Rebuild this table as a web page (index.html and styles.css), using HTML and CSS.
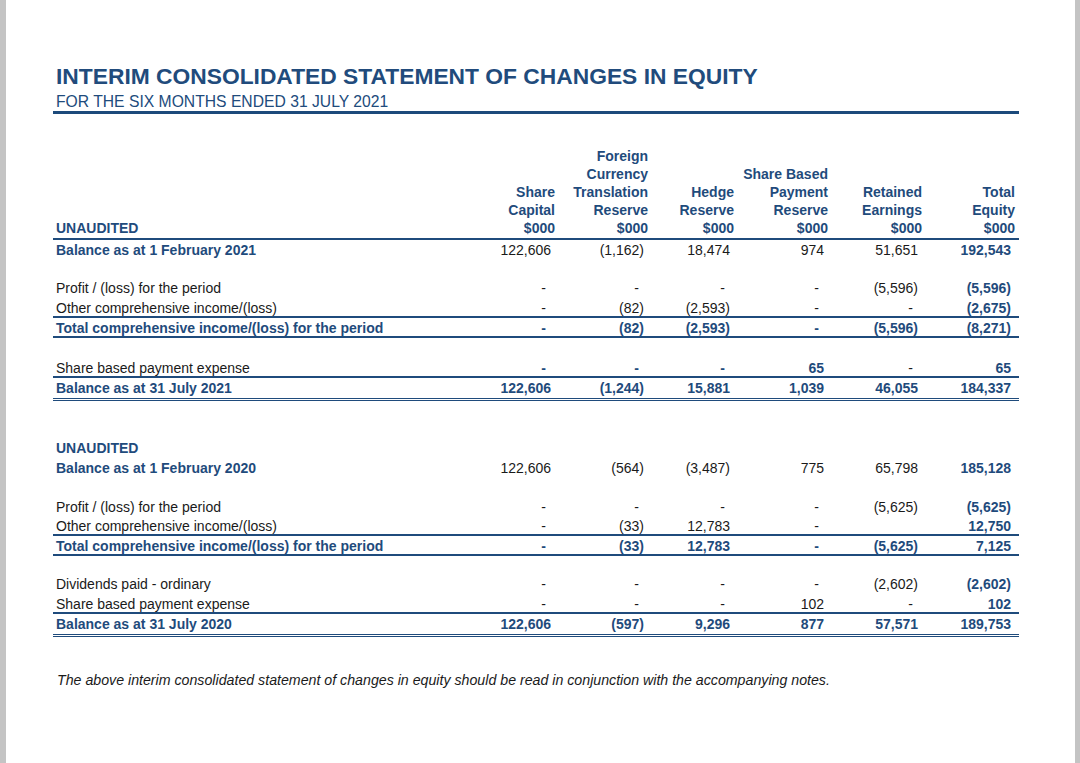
FILE: index.html
```html
<!DOCTYPE html>
<html>
<head>
<meta charset="utf-8">
<link rel="stylesheet" href="styles.css">
</head>
<body>
<div class="page">
  <header class="head">
    <h1 class="title">INTERIM CONSOLIDATED STATEMENT OF CHANGES IN EQUITY</h1>
    <div class="subtitle">FOR THE SIX MONTHS ENDED 31 JULY 2021</div>
  </header>

  <div class="table">
    <div class="hrow">
      <div></div>
      <div class="hc">Share<br>Capital</div>
      <div class="hc">Foreign<br>Currency<br>Translation<br>Reserve</div>
      <div class="hc">Hedge<br>Reserve</div>
      <div class="hc">Share Based<br>Payment<br>Reserve</div>
      <div class="hc">Retained<br>Earnings</div>
      <div class="hc">Total<br>Equity</div>
    </div>
    <div class="row unit">
      <div class="lab b">UNAUDITED</div>
      <div class="hc">$000</div>
      <div class="hc">$000</div>
      <div class="hc">$000</div>
      <div class="hc">$000</div>
      <div class="hc">$000</div>
      <div class="hc">$000</div>
    </div>

    <div class="row">
      <div class="lab b">Balance as at 1 February 2021</div>
      <div class="n">122,606</div><div class="n">(1,162)</div><div class="n">18,474</div><div class="n">974</div><div class="n">51,651</div><div class="n b">192,543</div>
    </div>
    <div class="gap s"></div>
    <div class="row">
      <div class="lab">Profit / (loss) for the period</div>
      <div class="d">-</div><div class="d">-</div><div class="d">-</div><div class="d">-</div><div class="n">(5,596)</div><div class="n b">(5,596)</div>
    </div>
    <div class="row ul">
      <div class="lab">Other comprehensive income/(loss)</div>
      <div class="d">-</div><div class="n">(82)</div><div class="n">(2,593)</div><div class="d">-</div><div class="d">-</div><div class="n b">(2,675)</div>
    </div>
    <div class="row ul b">
      <div class="lab">Total comprehensive income/(loss) for the period</div>
      <div class="d">-</div><div class="n">(82)</div><div class="n">(2,593)</div><div class="d">-</div><div class="n">(5,596)</div><div class="n">(8,271)</div>
    </div>
    <div class="gap"></div>
    <div class="row ul">
      <div class="lab">Share based payment expense</div>
      <div class="d b">-</div><div class="d b">-</div><div class="d b">-</div><div class="n b">65</div><div class="d">-</div><div class="n b">65</div>
    </div>
    <div class="row dbl b">
      <div class="lab">Balance as at 31 July 2021</div>
      <div class="n">122,606</div><div class="n">(1,244)</div><div class="n">15,881</div><div class="n">1,039</div><div class="n">46,055</div><div class="n">184,337</div>
    </div>

    <div class="gap big"></div>
    <div class="row">
      <div class="lab b">UNAUDITED</div>
    </div>
    <div class="row">
      <div class="lab b">Balance as at 1 February 2020</div>
      <div class="n">122,606</div><div class="n">(564)</div><div class="n">(3,487)</div><div class="n">775</div><div class="n">65,798</div><div class="n b">185,128</div>
    </div>
    <div class="gap m"></div>
    <div class="row short">
      <div class="lab">Profit / (loss) for the period</div>
      <div class="d">-</div><div class="d">-</div><div class="d">-</div><div class="d">-</div><div class="n">(5,625)</div><div class="n b">(5,625)</div>
    </div>
    <div class="row ul">
      <div class="lab">Other comprehensive income/(loss)</div>
      <div class="d">-</div><div class="n">(33)</div><div class="n">12,783</div><div class="d">-</div><div class="n"></div><div class="n b">12,750</div>
    </div>
    <div class="row ul b">
      <div class="lab">Total comprehensive income/(loss) for the period</div>
      <div class="d">-</div><div class="n">(33)</div><div class="n">12,783</div><div class="d">-</div><div class="n">(5,625)</div><div class="n">7,125</div>
    </div>
    <div class="gap s"></div>
    <div class="row">
      <div class="lab">Dividends paid - ordinary</div>
      <div class="d">-</div><div class="d">-</div><div class="d">-</div><div class="d">-</div><div class="n">(2,602)</div><div class="n b">(2,602)</div>
    </div>
    <div class="row ul">
      <div class="lab">Share based payment expense</div>
      <div class="d">-</div><div class="d">-</div><div class="d">-</div><div class="n">102</div><div class="d">-</div><div class="n b">102</div>
    </div>
    <div class="row dbl b">
      <div class="lab">Balance as at 31 July 2020</div>
      <div class="n">122,606</div><div class="n">(597)</div><div class="n">9,296</div><div class="n">877</div><div class="n">57,571</div><div class="n">189,753</div>
    </div>
  </div>

  <p class="note">The above interim consolidated statement of changes in equity should be read in conjunction with the accompanying notes.</p>
</div>
</body>
</html>
```

FILE: styles.css
```css
html, body {
  margin: 0;
  padding: 0;
}
body {
  background: #c4c4c4;
  font-family: "Liberation Sans", Arial, sans-serif;
  color: #1a1a1a;
}
.page {
  margin-left: 6px;
  width: 1069px;
  height: 763px;
  background: #ffffff;
  box-sizing: border-box;
  padding: 63px 0 0 47px;
}
.head {
  width: 966px;
  border-bottom: 3px solid #1c4a7b;
  color: #214b7c;
}
.title {
  margin: 0;
  padding-left: 3px;
  font-size: 22.8px;
  line-height: 26px;
  font-weight: bold;
}
.subtitle {
  margin-top: 4px;
  padding-left: 3px;
  font-size: 15.7px;
  line-height: 18px;
}
.table {
  width: 966px;
  margin-top: 33px;
  font-size: 14px;
}
.hrow, .row {
  display: grid;
  grid-template-columns: 413px 93px 93px 86px 94px 94px 93px;
}
.hrow {
  align-items: end;
  line-height: 18px;
}
.hc {
  text-align: right;
  padding-right: 4px;
  font-weight: bold;
  color: #1f4b7c;
}
.row {
  height: 20px;
  line-height: 20px;
  box-sizing: border-box;
}
.row.short {
  height: 19px;
}
.unit {
  height: 21px;
  line-height: 19px;
  border-bottom: 2px solid #1f4b7c;
}
.lab {
  padding-left: 3px;
  white-space: nowrap;
}
.n {
  text-align: right;
  padding-right: 8px;
}
.d {
  text-align: right;
  padding-right: 13px;
}
.b {
  font-weight: bold;
  color: #1f4b7c;
}
.ul {
  border-bottom: 2px solid #1f4b7c;
}
.dbl {
  height: 23px;
  border-bottom: 3px double #1f4b7c;
}
.gap {
  height: 20px;
}
.gap.s {
  height: 18px;
}
.gap.m {
  height: 19px;
}
.gap.big {
  height: 37px;
}
.note {
  margin: 33px 0 0 4px;
  font-size: 14.2px;
  line-height: 20px;
  font-style: italic;
  color: #1a1a1a;
}
```
